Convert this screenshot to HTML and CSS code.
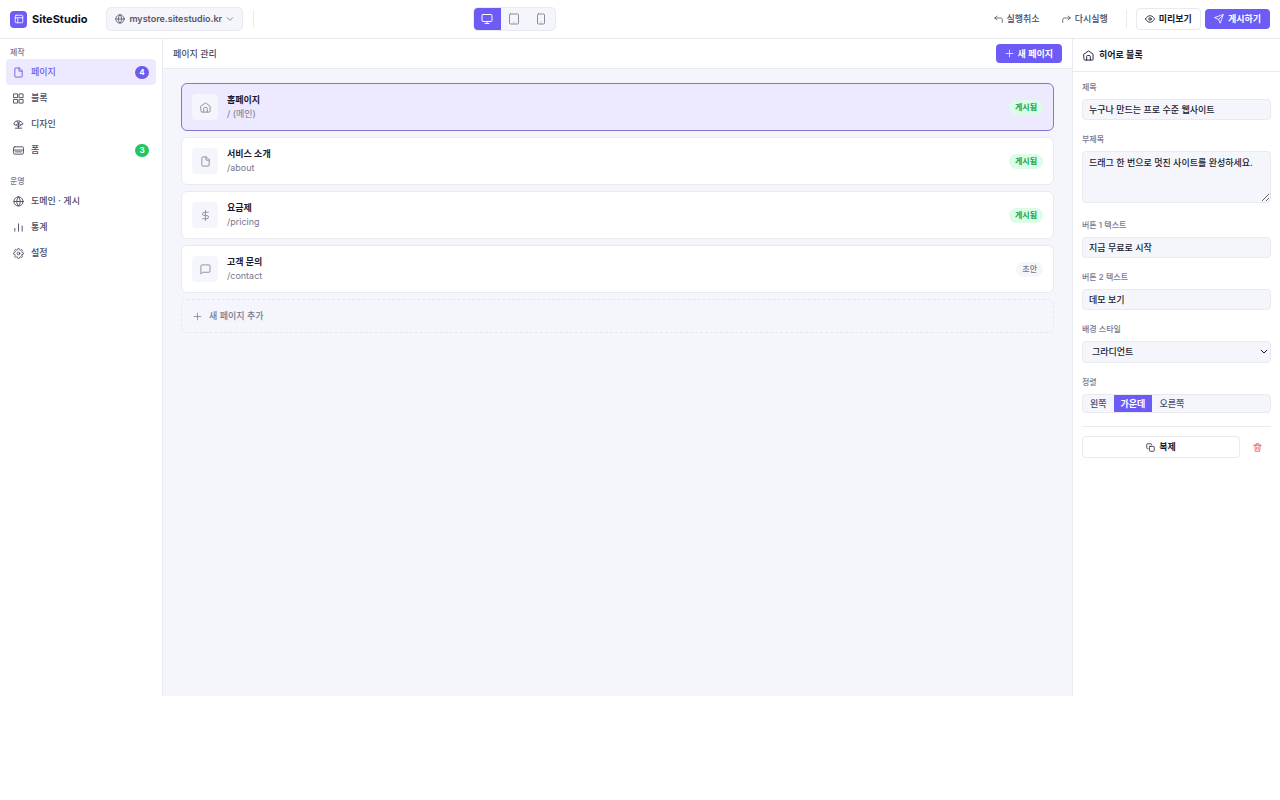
FILE: index.html
```html
<!DOCTYPE html>
<html lang="ko">
  <head>
    <meta charset="UTF-8" />
    <meta name="viewport" content="width=device-width, initial-scale=1.0" />
    <title>SiteStudio</title>
    <link rel="stylesheet" href="styles.css">
  </head>
  <body>
    <svg class="sprite" aria-hidden="true">
      <symbol id="i-globe" viewBox="0 0 24 24"><circle cx="12" cy="12" r="10" /><path d="M2 12h20M12 2a15 15 0 0 1 4 10 15 15 0 0 1-4 10 15 15 0 0 1-4-10 15 15 0 0 1 4-10z" /></symbol>
      <symbol id="i-file" viewBox="0 0 24 24"><path d="M13 2H6a2 2 0 0 0-2 2v16a2 2 0 0 0 2 2h12a2 2 0 0 0 2-2V9z" /><path d="M13 2v7h7" /></symbol>
      <symbol id="i-home" viewBox="0 0 24 24"><path d="M2 9l10-7 10 7v11a2 2 0 0 1-2 2H4a2 2 0 0 1-2-2z" /><path d="M8 22v-8a2 2 0 0 1 2-2h4a2 2 0 0 1 2 2v8" /></symbol>
      <symbol id="i-plus" viewBox="0 0 24 24"><path d="M12 3v18M3 12h18" /></symbol>
    </svg>

    <div class="app">
      <header class="topbar">
        <div class="topbar-left">
          <span class="logo">
            <svg class="icon" viewBox="0 0 24 24"><rect x="3" y="3" width="18" height="18" rx="2" /><path d="M3 9h18M9 9v12" /></svg>
          </span>
          <strong class="brand">SiteStudio</strong>
          <button class="domain" type="button">
            <svg class="icon"><use href="#i-globe" /></svg>
            mystore.sitestudio.kr
            <svg class="icon chevron" viewBox="0 0 24 24"><path d="M4 8l8 8 8-8" /></svg>
          </button>
          <span class="divider"></span>
        </div>

        <div class="devices">
          <button class="active" type="button" aria-label="데스크톱">
            <svg class="icon" viewBox="0 0 24 24"><rect x="2" y="3" width="20" height="14" rx="2" /><path d="M8 21h8M12 17v4" /></svg>
          </button>
          <button type="button" aria-label="태블릿">
            <svg class="icon" viewBox="0 0 24 24"><rect x="3" y="2" width="18" height="20" rx="2" /><path d="M12 18h.01" /></svg>
          </button>
          <button type="button" aria-label="모바일">
            <svg class="icon" viewBox="0 0 24 24"><rect x="5" y="2" width="14" height="20" rx="2" /><path d="M12 18h.01" /></svg>
          </button>
        </div>

        <div class="topbar-right">
          <button class="btn ghost" type="button">
            <svg class="icon small" viewBox="0 0 24 24"><path d="M8 13L2 8l6-5" /><path d="M22 20v-8a4 4 0 0 0-4-4H2" /></svg>
            실행취소
          </button>
          <button class="btn ghost" type="button">
            <svg class="icon small" viewBox="0 0 24 24"><path d="M16 13l6-5-6-5" /><path d="M2 20v-8a4 4 0 0 1 4-4h16" /></svg>
            다시실행
          </button>
          <span class="divider"></span>
          <button class="btn outline" type="button">
            <svg class="icon" viewBox="0 0 24 24"><path d="M1 12s4-8 11-8 11 8 11 8-4 8-11 8-11-8-11-8z" /><circle cx="12" cy="12" r="3" /></svg>
            미리보기
          </button>
          <button class="btn primary" type="button">
            <svg class="icon" viewBox="0 0 24 24"><path d="M22 2L11 13M22 2l-7 20-4-9-9-4z" /></svg>
            게시하기
          </button>
        </div>
      </header>

      <div class="workspace">
        <nav class="sidebar">
          <h2>제작</h2>
          <a class="nav-item active" href="#pages">
            <svg class="icon"><use href="#i-file" /></svg>
            페이지
            <span class="count">4</span>
          </a>
          <a class="nav-item" href="#blocks">
            <svg class="icon" viewBox="0 0 24 24"><path d="M2 2h8v8H2zM14 2h8v8h-8zM2 14h8v8H2zM14 14h8v8h-8z" /></svg>
            블록
          </a>
          <a class="nav-item" href="#design">
            <svg class="icon" viewBox="0 0 24 24"><path d="M2 11c0-4 4-7 9-7s9 3 11 7l-5 2-5-4-5 4z" /><path d="M12 9v11M5 20h14M7 13l5 4 5-4M8 5l4 4 4-4" /></svg>
            디자인
          </a>
          <a class="nav-item" href="#forms">
            <svg class="icon" viewBox="0 0 24 24"><rect x="1" y="4" width="22" height="16" rx="3" /><path d="M1 11h22M5 15h14" /></svg>
            폼
            <span class="count green">3</span>
          </a>
          <h2>운영</h2>
          <a class="nav-item" href="#domain">
            <svg class="icon"><use href="#i-globe" /></svg>
            도메인 · 게시
          </a>
          <a class="nav-item" href="#stats">
            <svg class="icon" viewBox="0 0 24 24"><path d="M4 20v-6M12 20V4M20 20V9" /></svg>
            통계
          </a>
          <a class="nav-item" href="#settings">
            <svg class="icon" viewBox="0 0 24 24"><path d="M19.400 15a1.650 1.650 0 0 0 .330 1.820l.060.060a2 2 0 1 1-2.830 2.830l-.060-.060a1.650 1.650 0 0 0-2.820 1.180V21a2 2 0 0 1-4 0v-.090a1.650 1.650 0 0 0-2.820-1.260l-.060.060a2 2 0 1 1-2.830-2.830l.060-.060A1.650 1.650 0 0 0 3.090 14H3a2 2 0 0 1 0-4h.090a1.650 1.650 0 0 0 1.260-2.820l-.060-.060a2 2 0 1 1 2.830-2.830l.060.060A1.650 1.650 0 0 0 10 3.090V3a2 2 0 0 1 4 0v.090a1.650 1.650 0 0 0 2.820 1.260l.060-.060a2 2 0 1 1 2.830 2.830l-.060.060A1.650 1.650 0 0 0 20.910 10H21a2 2 0 0 1 0 4h-.090a1.650 1.650 0 0 0-1.510 1z" /><circle cx="12" cy="12" r="3" /></svg>
            설정
          </a>
        </nav>

        <main class="content">
          <div class="content-head">
            <h1>페이지 관리</h1>
            <button class="btn primary new-page" type="button">
              <svg class="icon small"><use href="#i-plus" /></svg>
              새 페이지
            </button>
          </div>
          <div class="pages">
            <a class="page selected" href="#home">
              <span class="thumb"><svg class="icon"><use href="#i-home" /></svg></span>
              <span class="info"><strong>홈페이지</strong><small>/ (메인)</small></span>
              <span class="status live">게시됨</span>
            </a>
            <a class="page" href="#about">
              <span class="thumb"><svg class="icon"><use href="#i-file" /></svg></span>
              <span class="info"><strong>서비스 소개</strong><small>/about</small></span>
              <span class="status live">게시됨</span>
            </a>
            <a class="page" href="#pricing">
              <span class="thumb"><svg class="icon" viewBox="0 0 24 24"><path d="M12 1v22M18 5H9a3.500 3.500 0 0 0 0 7h6a3.500 3.500 0 0 1 0 7H6" /></svg></span>
              <span class="info"><strong>요금제</strong><small>/pricing</small></span>
              <span class="status live">게시됨</span>
            </a>
            <a class="page" href="#contact">
              <span class="thumb"><svg class="icon" viewBox="0 0 24 24"><path d="M22 16a2 2 0 0 1-2 2H6l-4 4V4a2 2 0 0 1 2-2h16a2 2 0 0 1 2 2z" /></svg></span>
              <span class="info"><strong>고객 문의</strong><small>/contact</small></span>
              <span class="status">초안</span>
            </a>
            <button class="add-page" type="button">
              <svg class="icon small"><use href="#i-plus" /></svg>
              새 페이지 추가
            </button>
          </div>
        </main>

        <aside class="panel">
          <h2><svg class="icon"><use href="#i-home" /></svg>히어로 블록</h2>
          <form class="fields">
            <div class="field">
              <label for="title">제목</label>
              <input id="title" type="text" value="누구나 만드는 프로 수준 웹사이트" />
            </div>
            <div class="field">
              <label for="subtitle">부제목</label>
              <textarea id="subtitle">드래그 한 번으로 멋진 사이트를 완성하세요.</textarea>
            </div>
            <div class="field">
              <label for="button1">버튼 1 텍스트</label>
              <input id="button1" type="text" value="지금 무료로 시작" />
            </div>
            <div class="field">
              <label for="button2">버튼 2 텍스트</label>
              <input id="button2" type="text" value="데모 보기" />
            </div>
            <div class="field">
              <label for="background">배경 스타일</label>
              <select id="background">
                <option>그라디언트</option>
              </select>
            </div>
            <div class="field">
              <span class="label" id="align-label">정렬</span>
              <div class="segments" role="group" aria-labelledby="align-label">
                <button type="button">왼쪽</button>
                <button class="active" type="button">가운데</button>
                <button type="button">오른쪽</button>
              </div>
            </div>
            <div class="actions">
              <button class="btn outline copy" type="button">
                <svg class="icon small" viewBox="0 0 24 24"><rect x="9" y="9" width="13" height="13" rx="2" /><path d="M5 15H4a2 2 0 0 1-2-2V4a2 2 0 0 1 2-2h9a2 2 0 0 1 2 2v1" /></svg>
                복제
              </button>
              <button class="remove" type="button" aria-label="삭제">
                <svg class="icon small" viewBox="0 0 24 24"><path d="M2 6h20M19 6l-1 16H6L5 6M8 6V2h8v4M10 11v6M14 11v6" /></svg>
              </button>
            </div>
          </form>
        </aside>
      </div>
    </div>
  </body>
</html>
```
FILE: styles.css
```css
* {
  box-sizing: border-box;
  margin: 0;
  padding: 0;
}

body {
  background: #fff;
  color: #1a1a2e;
  font: 500 9px/14px Inter, "Noto Sans CJK KR", sans-serif;
}

button,
input,
textarea,
select {
  font: inherit;
  color: inherit;
}

button {
  border: 0;
  background: none;
  cursor: pointer;
}

a {
  color: inherit;
  text-decoration: none;
}

.sprite {
  display: none;
}

.icon {
  width: 11px;
  height: 11px;
  flex: none;
  fill: none;
  stroke: currentColor;
  stroke-width: 2;
  stroke-linecap: round;
  stroke-linejoin: round;
}

.icon.small {
  width: 9px;
  height: 9px;
}

.app {
  display: flex;
  flex-direction: column;
  min-height: 87vh;
}

/* top bar */
.topbar {
  display: flex;
  align-items: center;
  height: 39px;
  padding: 0 10px;
  border-bottom: 1px solid #e8eaf0;
}

/* the device switch sits one third into the free space */
.topbar::before,
.topbar::after {
  content: "";
  flex: 1;
  order: 1;
}

.topbar::after {
  flex: 2;
  order: 3;
}

.topbar-left,
.topbar-right {
  display: flex;
  align-items: center;
}

.devices {
  order: 2;
}

.topbar-right {
  order: 4;
  gap: 4px;
}

.logo {
  display: flex;
  align-items: center;
  justify-content: center;
  width: 17px;
  height: 17px;
  border-radius: 4px;
  background: #6c5cf5;
  color: #fff;
}

.logo .icon {
  width: 10px;
  height: 10px;
}

.brand {
  margin: 0 19px 0 5px;
  font-size: 11px;
  font-weight: 700;
  color: #111120;
}

.domain {
  display: flex;
  align-items: center;
  gap: 4px;
  height: 24px;
  padding: 0 8px;
  border: 1px solid #e8eaf0;
  border-radius: 5px;
  background: #f4f6fb;
  color: #55556b;
  font-weight: 600;
}

.domain .icon {
  width: 10px;
  height: 10px;
}

.domain .chevron {
  width: 8px;
  height: 8px;
}

.divider {
  width: 1px;
  height: 18px;
  margin: 0 4px 0 10px;
  background: #e8eaf0;
}

.topbar-right .divider {
  margin: 0 5px;
}

.devices {
  display: flex;
  overflow: hidden;
  border: 1px solid #e8eaf0;
  border-radius: 5px;
  background: #f4f6fb;
  color: #8b8ba3;
}

.devices button {
  display: flex;
  align-items: center;
  justify-content: center;
  width: 27px;
  height: 22px;
}

.devices .icon {
  width: 12px;
  height: 12px;
}

.devices .active {
  background: #6c5cf5;
  color: #fff;
}

.btn {
  display: flex;
  align-items: center;
  justify-content: center;
  gap: 4px;
  height: 22px;
  padding: 0 8px;
  border: 1px solid transparent;
  border-radius: 4px;
  font-weight: 600;
}

.topbar .btn .icon:not(.small) {
  width: 10px;
  height: 10px;
}

.ghost {
  color: #4a4a62;
  font-weight: 500;
}

.outline {
  border-color: #e8eaf0;
  background: #fff;
}

.primary {
  background: #6c5cf5;
  color: #fff;
}

.topbar .primary {
  height: 20px;
}

.workspace {
  display: flex;
  flex: 1;
}

/* left menu */
.sidebar {
  display: flex;
  flex-direction: column;
  width: 163px;
  padding: 7px 6px;
  border-right: 1px solid #e8eaf0;
}

.sidebar h2 {
  padding: 0 4px;
  font-size: 8px;
  line-height: 13px;
  font-weight: 500;
  color: #77778f;
}

.sidebar .nav-item + h2 {
  margin-top: 12px;
}

.nav-item {
  display: flex;
  align-items: center;
  gap: 7px;
  height: 26px;
  padding: 0 7px;
  border-radius: 4px;
  color: #4a4a62;
}

.nav-item.active {
  background: #ede9fe;
  color: #6c5ce7;
}

.count {
  min-width: 14px;
  margin-left: auto;
  border-radius: 7px;
  background: #6c5ce7;
  color: #fff;
  font-size: 8px;
  line-height: 13px;
  font-weight: 700;
  text-align: center;
}

.count.green {
  background: #22c55e;
}

/* page list */
.content {
  flex: 1;
  background: #f4f6fb;
}

.content-head {
  display: flex;
  align-items: center;
  justify-content: space-between;
  height: 30px;
  padding: 0 10px;
  border-bottom: 1px solid #e8eaf0;
  background: #fff;
}

.content-head h1 {
  font-size: 9px;
  font-weight: 500;
  color: #4a4a62;
}

.new-page {
  height: 19px;
}

.pages {
  display: flex;
  flex-direction: column;
  gap: 6px;
  padding: 14px 18px;
}

.page {
  display: flex;
  align-items: center;
  gap: 9px;
  min-height: 48px;
  padding: 0 10px;
  border: 1px solid #e8eaf0;
  border-radius: 6px;
  background: #fff;
}

.page.selected {
  border-color: #8375d2;
  background: #ede9fe;
}

.thumb {
  display: flex;
  align-items: center;
  justify-content: center;
  width: 26px;
  height: 26px;
  border-radius: 4px;
  background: #f4f6fb;
  color: #8b8ba3;
}

.info {
  display: flex;
  flex-direction: column;
}

.info strong {
  font-weight: 600;
}

.info small {
  font-size: 9px;
  font-weight: 400;
  color: #77778f;
}

.status {
  margin-left: auto;
  padding: 0 6px;
  border-radius: 8px;
  background: #f4f6fb;
  color: #77778f;
  font-size: 8px;
  line-height: 15px;
}

.status.live {
  background: #dcfce7;
  color: #16a34a;
  font-weight: 600;
}

.add-page {
  display: flex;
  align-items: center;
  gap: 7px;
  height: 34px;
  padding: 0 11px;
  border: 1px dashed #e5e7ee;
  border-radius: 6px;
  color: #77778f;
}

/* block settings */
.panel {
  width: 208px;
  border-left: 1px solid #e8eaf0;
}

.panel h2 {
  display: flex;
  align-items: center;
  gap: 5px;
  height: 33px;
  padding: 0 10px;
  border-bottom: 1px solid #e8eaf0;
  font-size: 9px;
  font-weight: 600;
}

.fields {
  display: flex;
  flex-direction: column;
  gap: 13px;
  padding: 9px;
}

.field {
  display: flex;
  flex-direction: column;
  gap: 5px;
}

.field label,
.field .label {
  font-size: 8px;
  line-height: 13px;
  color: #77778f;
}

.field input,
.field textarea,
.field select,
.segments {
  width: 100%;
  border: 1px solid #e8eaf0;
  border-radius: 4px;
  background: #f4f6fb;
}

.field input {
  height: 21px;
  padding: 0 6px;
}

.field textarea {
  height: 52px;
  margin-bottom: 3px;
  padding: 4px 6px;
  resize: vertical;
}

.field select {
  height: 22px;
  padding: 0 9px;
  appearance: none;
  background: #f4f6fb url("data:image/svg+xml,%3Csvg xmlns='http://www.w3.org/2000/svg' viewBox='0 0 8 8' fill='none' stroke='%231a1a2e'%3E%3Cpath d='M1 2l3 3 3-3'/%3E%3C/svg%3E") no-repeat right 2px center / 8px;
}

.segments {
  display: flex;
  overflow: hidden;
  color: #4a4a62;
}

.segments button {
  height: 17px;
  padding: 0 7px;
}

.segments .active {
  background: #6c5cf5;
  color: #fff;
  font-weight: 600;
}

.actions {
  display: flex;
  gap: 4px;
  padding-top: 9px;
  border-top: 1px solid #e8eaf0;
}

.copy {
  flex: 1;
}

.remove {
  display: flex;
  align-items: center;
  justify-content: center;
  width: 27px;
  color: #ef4444;
}
```
